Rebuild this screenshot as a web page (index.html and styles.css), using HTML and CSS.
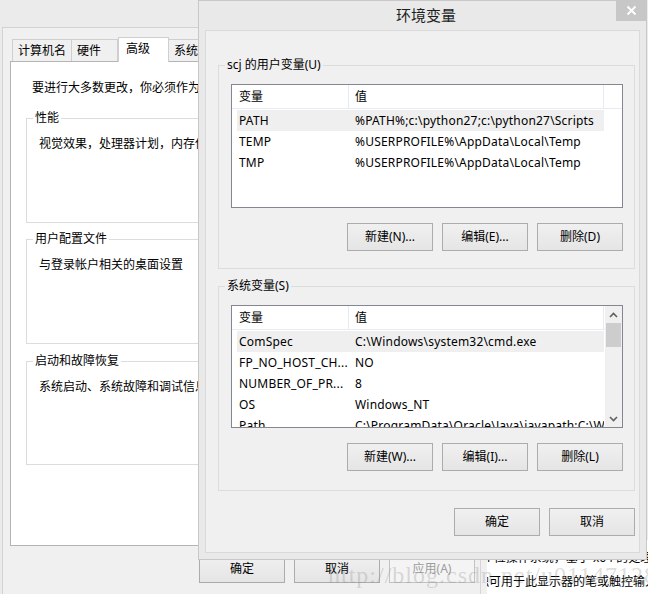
FILE: index.html
```html
<!DOCTYPE html>
<html lang="zh-CN">
<head>
<meta charset="utf-8">
<title>环境变量</title>
<link rel="stylesheet" href="styles.css">
</head>
<body>
<div class="desk">
  <div class="sys">
    <div class="tabs">
      <div class="tab">计算机名</div>
      <div class="tab">硬件</div>
      <div class="tab active">高级</div>
      <div class="tab">系统保护</div>
      <div class="tab">远程</div>
    </div>
    <div class="panel">
      <p class="intro">要进行大多数更改，你必须作为管理员登录。</p>
      <div class="group">
        <div class="legend">性能</div>
        <p class="gtext">视觉效果，处理器计划，内存使用，以及虚拟内存</p>
      </div>
      <div class="group">
        <div class="legend">用户配置文件</div>
        <p class="gtext">与登录帐户相关的桌面设置</p>
      </div>
      <div class="group group-last">
        <div class="legend">启动和故障恢复</div>
        <p class="gtext">系统启动、系统故障和调试信息</p>
      </div>
    </div>
    <div class="btnrow sys-btns">
      <div class="btn">确定</div>
      <div class="btn">取消</div>
      <div class="btn disabled">应用(A)</div>
    </div>
  </div>

  <div class="behind">
    <div class="behind-client">
      <p class="bline">64 位操作系统，基于 x64 的处理器</p>
      <p class="bline">触可用于此显示器的笔或触控输入</p>
    </div>
  </div>

  <div class="env">
    <div class="title">环境变量</div>
    <div class="close">
      <svg width="11" height="11" viewBox="0 0 11 11"><path d="M1.5 1.5 L9.5 9.5 M9.5 1.5 L1.5 9.5" stroke="#fff" stroke-width="1.8" fill="none"/></svg>
    </div>
    <div class="client">
      <div class="egroup egroup-user">
        <div class="legend elegend">scj 的用户变量(U)</div>
        <div class="list list-user">
          <div class="list-main">
            <div class="lhead">
              <div class="hc1">变量</div>
              <div class="hc2">值</div>
              <div class="hfill"></div>
            </div>
            <div class="rows">
              <div class="row sel"><div class="c1">PATH</div><div class="c2">%PATH%;c:\python27;c:\python27\Scripts</div></div>
              <div class="row"><div class="c1">TEMP</div><div class="c2">%USERPROFILE%\AppData\Local\Temp</div></div>
              <div class="row"><div class="c1">TMP</div><div class="c2">%USERPROFILE%\AppData\Local\Temp</div></div>
            </div>
          </div>
        </div>
        <div class="btnrow ebtns">
          <div class="btn">新建(N)...</div>
          <div class="btn">编辑(E)...</div>
          <div class="btn">删除(D)</div>
        </div>
      </div>

      <div class="egroup egroup-sys">
        <div class="legend elegend">系统变量(S)</div>
        <div class="list list-sys">
          <div class="list-main">
            <div class="lhead">
              <div class="hc1">变量</div>
              <div class="hc2">值</div>
            </div>
            <div class="rows">
              <div class="row sel"><div class="c1">ComSpec</div><div class="c2">C:\Windows\system32\cmd.exe</div></div>
              <div class="row"><div class="c1">FP_NO_HOST_CH...</div><div class="c2">NO</div></div>
              <div class="row"><div class="c1">NUMBER_OF_PR...</div><div class="c2">8</div></div>
              <div class="row"><div class="c1">OS</div><div class="c2">Windows_NT</div></div>
              <div class="row"><div class="c1">Path</div><div class="c2">C:\ProgramData\Oracle\Java\javapath;C:\Windows</div></div>
            </div>
          </div>
          <div class="scroll">
            <div class="arrow">
              <svg width="9" height="6" viewBox="0 0 9 6"><path d="M1 5 L4.5 1.5 L8 5" stroke="#606060" stroke-width="1.6" fill="none"/></svg>
            </div>
            <div class="thumb"></div>
            <div class="track"></div>
            <div class="arrow">
              <svg width="9" height="6" viewBox="0 0 9 6"><path d="M1 1 L4.5 4.5 L8 1" stroke="#606060" stroke-width="1.6" fill="none"/></svg>
            </div>
          </div>
        </div>
        <div class="btnrow ebtns">
          <div class="btn">新建(W)...</div>
          <div class="btn">编辑(I)...</div>
          <div class="btn">删除(L)</div>
        </div>
      </div>

      <div class="btnrow okrow">
        <div class="btn">确定</div>
        <div class="btn">取消</div>
      </div>
    </div>
  </div>

  <div class="watermark">http://blog.csdn.net/u011471286</div>
</div>
</body>
</html>
```

FILE: styles.css
```css
* { box-sizing: border-box; }

body {
  margin: 0;
  background: #ebebeb;
  font-family: "Noto Sans", "Noto Sans CJK SC", sans-serif;
  font-size: 12px;
  line-height: 16px;
  color: #000;
}

p { margin: 0; }

.desk {
  position: relative;
  width: 648px;
  height: 594px;
  overflow: hidden;
  background: #ebebeb;
}

/* ---------- system properties window (back) ---------- */
.sys {
  position: absolute;
  left: 2px;
  top: 27px;
  width: 479px;
  height: 567px;
  background: #f0f0f0;
  border: 1px solid #d2d2d2;
  border-bottom: none;
  padding: 9px 0 0 7px;
}

.tabs {
  display: flex;
  align-items: flex-end;
  height: 24px;
  margin-left: 2px;
}

.tab {
  height: 22px;
  min-width: 46px;
  padding: 0 5px;
  line-height: 21px;
  border: 1px solid #cfcfcf;
  border-bottom: none;
  background: #f0f0f0;
  white-space: nowrap;
}

.tab + .tab { border-left: none; }

.tab.active {
  height: 25px;
  min-width: 51px;
  padding-left: 7px;
  margin-bottom: -1px;
  line-height: 22px;
  background: #fff;
  border-left: 1px solid #cfcfcf;
  position: relative;
  z-index: 1;
}

.tab.active + .tab { border-left: none; }

.panel {
  width: 462px;
  height: 485px;
  background: #fff;
  border: 1px solid #b4b4b4;
  padding: 18px 0 0 15px;
}

.intro {
  margin: 0 0 22px 6px;
  white-space: nowrap;
}

.group {
  width: 430px;
  height: 105px;
  border: 1px solid #dcdcdc;
}

.group + .group { margin-top: 16px; }
.group-last { height: 104px; margin-top: 17px !important; }

.legend {
  display: block;
  width: fit-content;
  margin: -9px 0 0 6px;
  padding: 0 2px;
  background: #fff;
  white-space: nowrap;
}

.gtext {
  margin: 10px 0 0 12px;
  white-space: nowrap;
}

.btnrow {
  display: flex;
  justify-content: flex-end;
  gap: 9px;
}

.sys-btns {
  margin: 9px 5px 0 0;
}

.btn {
  width: 86px;
  height: 28px;
  border: 1px solid #acacac;
  background: linear-gradient(#f0f0f0, #e5e5e5);
  text-align: center;
  line-height: 26px;
  white-space: nowrap;
}

.btn.disabled {
  color: #9d9d9d;
  border-color: #c2c2c2;
  background: #f4f4f4;
}

/* ---------- window behind, bottom right ---------- */
.behind {
  position: absolute;
  left: 480px;
  top: 540px;
  width: 168px;
  height: 54px;
  background: #f0f0f0;
  border-left: 1px solid #d6d6d6;
  padding-left: 6px;
}

.behind-client {
  height: 100%;
  background: #fff;
  overflow: hidden;
  padding-top: 6px;
}

.bline {
  line-height: 24px;
  white-space: nowrap;
  margin-left: -10px;
}

/* ---------- environment variables dialog ---------- */
.env {
  position: absolute;
  left: 198px;
  top: 0;
  width: 449px;
  height: 560px;
  background: #e9e9e9;
  border: 1px solid #c8c8c8;
  padding: 0 6px 6px;
  display: flex;
  flex-direction: column;
}

.title {
  height: 29px;
  line-height: 29px;
  text-align: center;
  font-size: 15px;
  color: #1e1e1e;
  padding-left: 7px;
}

.close {
  position: absolute;
  top: -1px;
  right: -1px;
  width: 31px;
  height: 21px;
  background: #c7c7c7;
  display: flex;
  align-items: center;
  justify-content: center;
}

.client {
  flex: 1;
  background: #f0f0f0;
  border: 1px solid #dadada;
}

.egroup {
  width: 417px;
  margin-left: 12px;
  border: 1px solid #dcdcdc;
}

.egroup-user { height: 204px; margin-top: 34px; }
.egroup-sys { height: 205px; margin-top: 17px; }

.elegend { background: #f0f0f0; }

.list {
  width: 392px;
  margin: 11px 0 0 12px;
  border: 1px solid #828790;
  background: #fff;
  display: flex;
  overflow: hidden;
}

.list-user { height: 124px; }
.list-sys { height: 123px; }

.list-main {
  flex: 1;
  min-width: 0;
  overflow: hidden;
}

.lhead {
  display: flex;
  height: 24px;
  line-height: 23px;
  border-bottom: 1px solid #e6ecf3;
}

.hc1 {
  flex-shrink: 0;
  width: 117px;
  padding-left: 7px;
  border-right: 1px solid #e3ebf5;
}

.hc2 {
  flex-shrink: 0;
  width: 255px;
  padding-left: 6px;
  border-right: 1px solid #e3ebf5;
}

.hfill { flex: 1; }

.rows { padding-top: 1px; }

.row {
  display: flex;
  height: 21px;
  line-height: 21px;
  width: 367px;
  margin-left: 5px;
  white-space: nowrap;
  letter-spacing: 0.2px;
  overflow: hidden;
}

.row.sel { background: #efefef; }

.c1 { flex-shrink: 0; width: 116px; padding-left: 2px; }
.c2 { flex-shrink: 0; padding-left: 2px; }

.scroll {
  flex-shrink: 0;
  width: 17px;
  background: #f0f0f0;
  display: flex;
  flex-direction: column;
  align-items: center;
}

.arrow {
  height: 17px;
  width: 17px;
  display: flex;
  align-items: center;
  justify-content: center;
}

.thumb {
  width: 15px;
  height: 24px;
  background: #cdcdcd;
}

.track { flex: 1; }

.ebtns {
  width: 392px;
  margin: 15px 0 0 12px;
}

.okrow {
  margin: 17px 4px 0 0;
}

/* ---------- watermark ---------- */
.watermark {
  position: absolute;
  left: 328px;
  top: 560px;
  font-family: "Liberation Serif", serif;
  font-size: 24px;
  line-height: 30px;
  letter-spacing: 1px;
  color: rgba(140, 140, 140, 0.3);
  white-space: nowrap;
}
```
